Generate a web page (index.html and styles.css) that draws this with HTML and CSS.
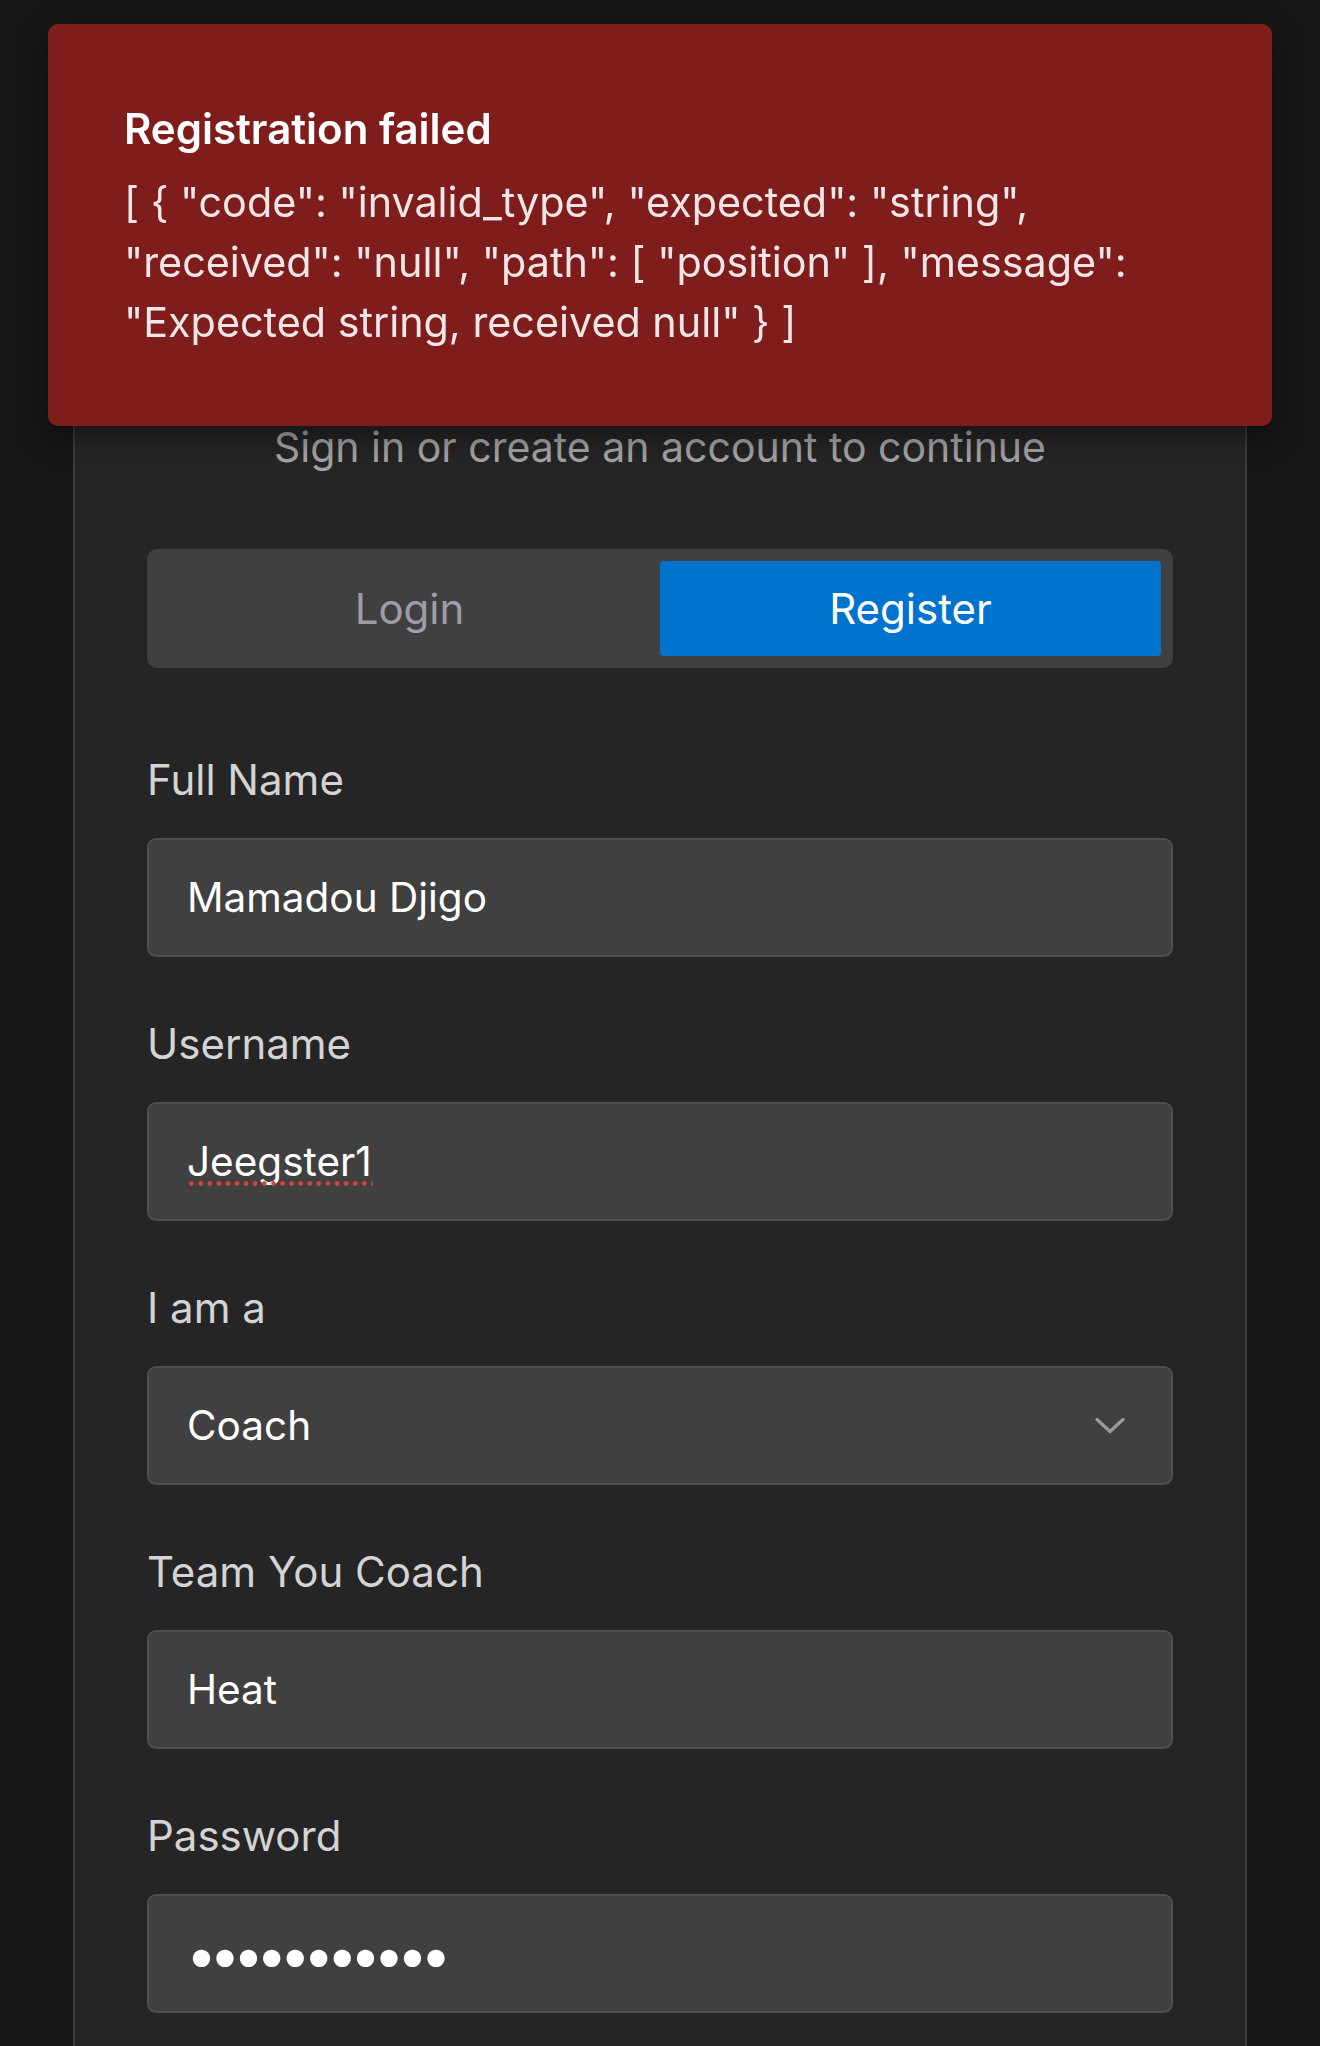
FILE: index.html
```html
<!DOCTYPE html>
<html lang="en">
<head>
<meta charset="utf-8">
<title>Register</title>
<link rel="stylesheet" href="styles.css">
</head>
<body>
<div class="toast" role="alert">
  <div class="toast-title">Registration failed</div>
  <div class="toast-body">[ { "code": "invalid_type", "expected": "string", "received": "null", "path": [ "position" ], "message": "Expected string, received null" } ]</div>
</div>

<main class="page">
  <section class="card">
    <p class="subtitle">Sign in or create an account to continue</p>

    <div class="tabs">
      <button class="tab" type="button">Login</button>
      <button class="tab tab-active" type="button">Register</button>
    </div>

    <form class="form">
      <div class="field">
        <label class="label" for="fullname">Full Name</label>
        <input class="control" id="fullname" type="text" value="Mamadou Djigo">
      </div>
      <div class="field">
        <label class="label" for="username">Username</label>
        <div class="control-wrap">
          <input class="control" id="username" type="text" value="Jeegster1">
          <span class="spell-mark" aria-hidden="true"></span>
        </div>
      </div>
      <div class="field">
        <label class="label" for="role">I am a</label>
        <div class="control-wrap">
          <select class="control select" id="role">
            <option>Coach</option>
            <option>Player</option>
          </select>
          <svg class="chevron" width="30" height="17" viewBox="0 0 30 17" aria-hidden="true"><path d="M2 2 L15 14 L28 2" fill="none" stroke="#9a9a9a" stroke-width="3.2" stroke-linecap="round" stroke-linejoin="round"/></svg>
        </div>
      </div>
      <div class="field">
        <label class="label" for="team">Team You Coach</label>
        <input class="control" id="team" type="text" value="Heat">
      </div>
      <div class="field">
        <label class="label" for="password">Password</label>
        <input class="control password" id="password" type="password" value="xxxxxxxxxxx">
      </div>
    </form>
  </section>
</main>
</body>
</html>
```

FILE: styles.css
```css
* {
  box-sizing: border-box;
}

html, body {
  margin: 0;
  padding: 0;
  background: #171717;
  font-family: Inter, "Noto Sans", "Liberation Sans", sans-serif;
}

.toast {
  position: fixed;
  top: 24px;
  left: 48px;
  right: 48px;
  z-index: 10;
  background: #7f1d1d;
  border-radius: 10px;
  padding: 77px 76px 74px 76px;
  box-shadow: 0 10px 30px rgba(0, 0, 0, 0.45);
}

.toast-title {
  color: #ffffff;
  font-size: 42px;
  font-weight: 600;
  line-height: 56px;
  margin-bottom: 15px;
}

.toast-body {
  color: #f1e6e6;
  font-size: 41.3px;
  line-height: 60px;
}

.page {
  padding: 0 73px;
}

.card {
  margin-top: 100px;
  background: #252525;
  border: 2px solid #3b3b3b;
  border-bottom: none;
  border-radius: 12px 12px 0 0;
  padding: 315px 72px 80px;
  min-height: 1946px;
}

.subtitle {
  margin: 0 0 72px;
  text-align: center;
  color: #a3a3a3;
  font-size: 41px;
  line-height: 60px;
}

.tabs {
  display: grid;
  grid-template-columns: 1fr 1fr;
  height: 119px;
  padding: 12px;
  background: #404040;
  border-radius: 10px;
  margin-bottom: 82px;
}

.tab {
  border: none;
  background: transparent;
  font-family: inherit;
  font-size: 42px;
  color: #9d9ca8;
  border-radius: 4px;
  cursor: pointer;
}

.tab-active {
  background: #0073cf;
  color: #ffffff;
}

.form {
  display: flex;
  flex-direction: column;
  gap: 57px;
}

.field {
  display: flex;
  flex-direction: column;
}

.label {
  color: #d4d4d4;
  font-size: 42px;
  line-height: 60px;
  margin-bottom: 28px;
}

.control-wrap {
  position: relative;
}

.control {
  display: block;
  width: 100%;
  height: 119px;
  background: #404040;
  border: 2px solid #4f4f4f;
  border-radius: 9px;
  color: #ffffff;
  font-family: inherit;
  font-size: 40.5px;
  padding: 0 38px;
  outline: none;
}

.spell-mark {
  position: absolute;
  left: 40px;
  top: 79px;
  width: 186px;
  height: 5px;
  background-image: radial-gradient(circle, #d9413a 2px, transparent 2.6px);
  background-size: 9.1px 5px;
  background-repeat: repeat-x;
  pointer-events: none;
}

.select {
  appearance: none;
  -webkit-appearance: none;
}

.chevron {
  position: absolute;
  right: 48px;
  top: 50%;
  transform: translateY(-50%);
  pointer-events: none;
}

.password {
  font-size: 55px;
  letter-spacing: -7.5px;
  padding-left: 37px;
}
```
